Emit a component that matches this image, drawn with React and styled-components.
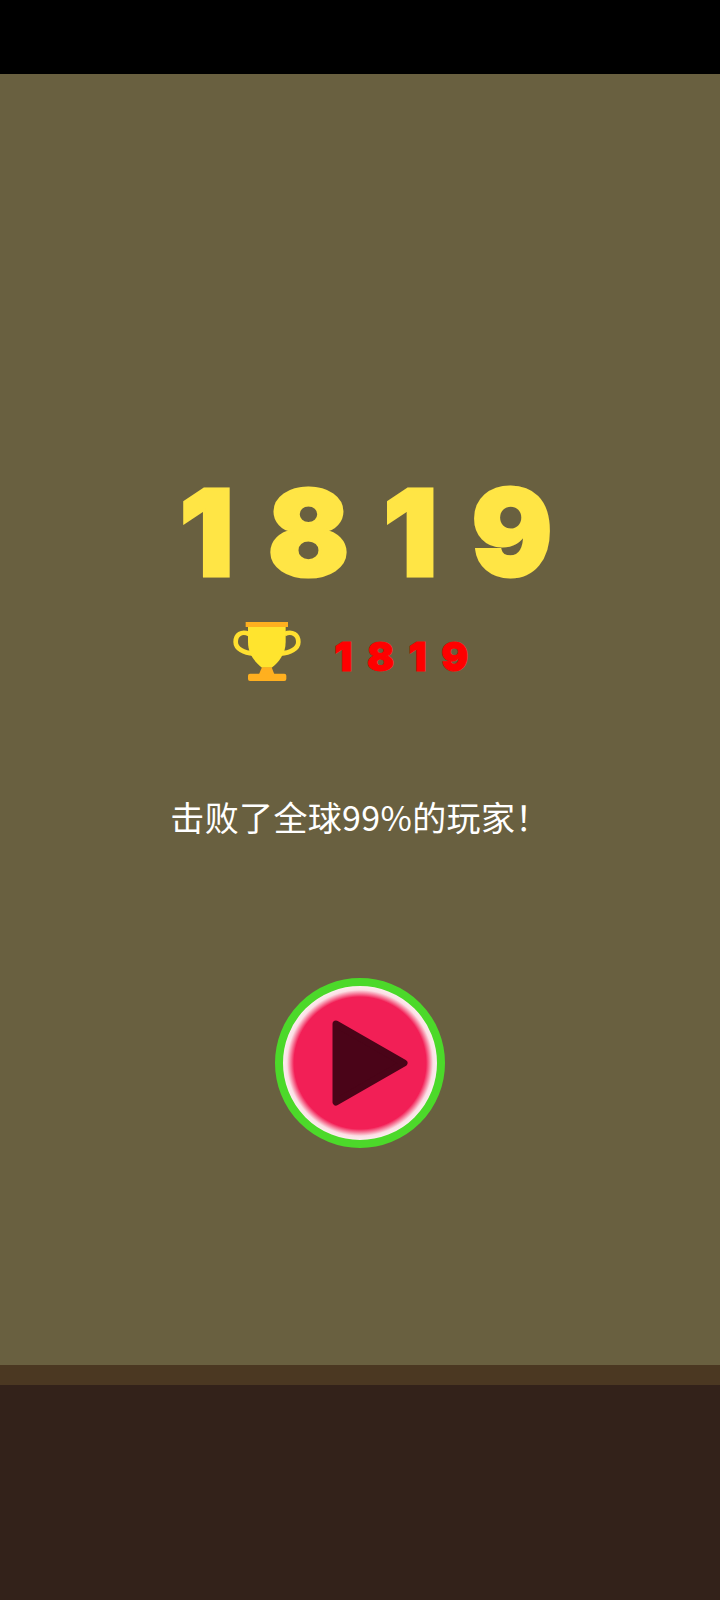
import React from "react";
import styled, { createGlobalStyle } from "styled-components";

const Global = createGlobalStyle`
  html, body { margin: 0; padding: 0; background: #000; }
  #root { width: 720px; height: 1600px; }
`;

const Screen = styled.div`
  width: 720px;
  height: 1600px;
  display: flex;
  flex-direction: column;
  overflow: hidden;
  font-family: "Noto Sans CJK SC", "Noto Sans", sans-serif;
`;

const StatusBar = styled.div`
  height: 74px;
  flex: none;
  background: #000;
`;

const Stage = styled.main`
  flex: 1;
  background: #696040;
  display: flex;
  flex-direction: column;
  align-items: center;
  padding-top: 395px;
`;

const Score = styled.div`
  font-family: Inter, "Noto Sans", sans-serif;
  font-size: 120px;
  line-height: 128px;
  height: 128px;
  font-weight: 900;
  color: #ffe545;
  letter-spacing: 34px;
  margin-right: -46px;
  -webkit-text-stroke: 3px #ffe545;
`;

const BestRow = styled.div`
  display: flex;
  align-items: center;
  gap: 33px;
  margin: 22px 4px 0 0;
  height: 64px;
`;

const BestScore = styled.span`
  font-family: Inter, "Noto Sans", sans-serif;
  font-size: 40px;
  line-height: 64px;
  margin-top: 12px;
  font-weight: 900;
  color: #ff0000;
  letter-spacing: 14.5px;
  -webkit-text-stroke: 1px #ff0000;
`;

const Message = styled.p`
  margin: 109px 0 0;
  font-size: 34px;
  letter-spacing: 0.35px;
  line-height: 50px;
  color: #fff;
  font-weight: 400;
`;

const PlayButton = styled.button`
  margin-top: 136px;
  width: 170px;
  height: 170px;
  padding: 0;
  border: 8px solid #4cd92a;
  border-radius: 50%;
  box-sizing: border-box;
  background: radial-gradient(circle, #f21f56 0, #f21f56 66px, #fbdfe4 73px, #fdeef0 77px);
  display: flex;
  align-items: center;
  justify-content: center;
`;

const Band = styled.div`
  height: 20px;
  flex: none;
  background: #4b3822;
`;

const Ground = styled.div`
  height: 215px;
  flex: none;
  background: #33221a;
`;

const Trophy = () => (
  <svg width="68" height="59" viewBox="28 40 202 177">
    <path d="M75 76C52 66 35 78 35 100c0 20 24 33 54 35" fill="none" stroke="#ffe030" strokeWidth="14" />
    <path d="M182 76c23-10 41 2 41 24 0 20-24 33-54 35" fill="none" stroke="#ffe030" strokeWidth="14" />
    <path d="M72 50H185V100C185 135 165 160 143 177H114C92 160 72 135 72 100Z" fill="#ffe42e" />
    <rect x="65" y="40" width="127" height="15" fill="#ffb01f" />
    <path d="M114 176H143L151 197H105Z" fill="#ffb01f" />
    <rect x="72" y="195" width="115" height="22" rx="6" fill="#ffb01f" />
  </svg>
);

const PlayIcon = () => (
  <svg width="76" height="86" viewBox="0 0 76 86" style={{ marginLeft: 20 }}>
    <path d="M4 4 L72 43 L4 82 Z" fill="#4a0418" stroke="#4a0418" strokeWidth="7" strokeLinejoin="round" />
  </svg>
);

export default function App() {
  return (
    <Screen>
      <Global />
      <StatusBar />
      <Stage>
        <Score>1819</Score>
        <BestRow>
          <Trophy />
          <BestScore>1819</BestScore>
        </BestRow>
        <Message>击败了全球99%的玩家！</Message>
        <PlayButton aria-label="play">
          <PlayIcon />
        </PlayButton>
      </Stage>
      <Band />
      <Ground />
    </Screen>
  );
}
